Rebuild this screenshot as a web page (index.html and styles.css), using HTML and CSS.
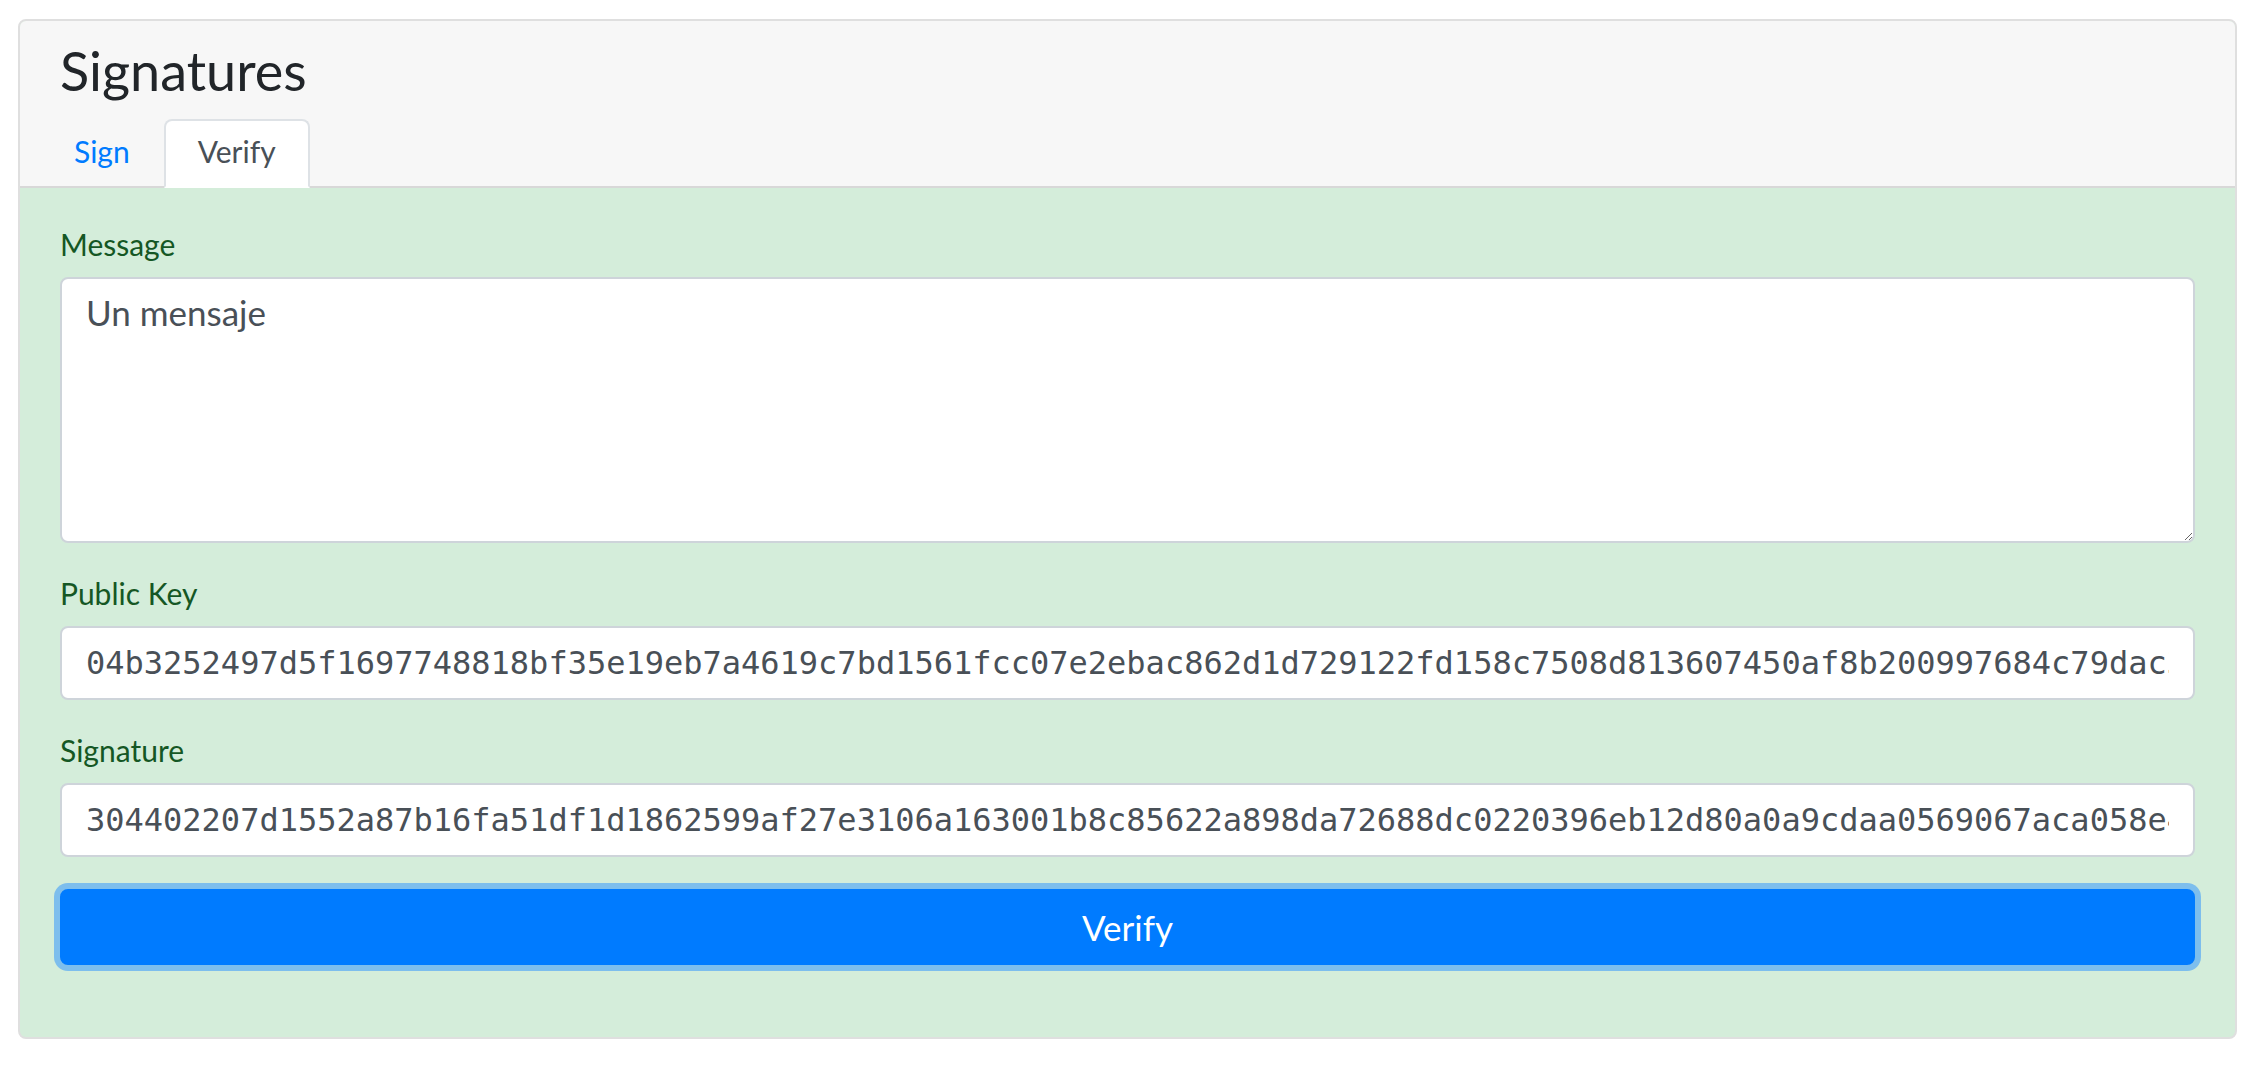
FILE: index.html
```html
<!DOCTYPE html>
<html lang="en">
<head>
<meta charset="utf-8">
<title>Signatures</title>
<link rel="stylesheet" href="styles.css">
</head>
<body>
<div class="page">
  <div class="card">
    <div class="card-header">
      <h3 class="card-title">Signatures</h3>
      <ul class="tabs">
        <li><a class="tab-link" href="#">Sign</a></li>
        <li><a class="tab-link active" href="#">Verify</a></li>
      </ul>
    </div>
    <div class="card-body">
      <div class="form-group">
        <label class="field-label" for="msg">Message</label>
        <textarea id="msg" class="field field-area">Un mensaje</textarea>
      </div>
      <div class="form-group">
        <label class="field-label" for="pub">Public Key</label>
        <input id="pub" class="field field-mono" type="text" value="04b3252497d5f1697748818bf35e19eb7a4619c7bd1561fcc07e2ebac862d1d729122fd158c7508d813607450af8b200997684c79dac3e0f5b7c1a2d4e6f8091a2">
      </div>
      <div class="form-group">
        <label class="field-label" for="sig">Signature</label>
        <input id="sig" class="field field-mono" type="text" value="304402207d1552a87b16fa51df1d1862599af27e3106a163001b8c85622a898da72688dc0220396eb12d80a0a9cdaa0569067aca058e4f1b2c3d">
      </div>
      <button class="btn-verify" type="button">Verify</button>
    </div>
  </div>
</div>
</body>
</html>
```
FILE: styles.css
```css
html, body {
  margin: 0;
  padding: 0;
  background: #ffffff;
}

body {
  font-family: "Lato", "DejaVu Sans", sans-serif;
  color: #212529;
}

.page {
  padding: 19px 19px 31px 18px;
}

.card {
  border: 2px solid #dfdfdf;
  border-radius: 8px;
  overflow: hidden;
  background: #d4edda;
}

.card-header {
  background: #f7f7f7;
  padding: 18px 40px 0 40px;
  border-bottom: 2px solid #d8d8d8;
}

.card-title {
  margin: 0 0 16px 0;
  font-size: 54px;
  line-height: 64px;
  font-weight: 400;
  color: #212529;
}

.tabs {
  list-style: none;
  margin: 0 0 -2px -20px;
  padding: 0;
  display: flex;
}

.tab-link {
  display: block;
  padding: 15px 32px 19px;
  font-size: 30px;
  line-height: 31px;
  color: #007bff;
  text-decoration: none;
  border: 2px solid transparent;
  border-top-left-radius: 8px;
  border-top-right-radius: 8px;
}

.tab-link.active {
  color: #495057;
  background: #ffffff;
  border-color: #dee2e6 #dee2e6 #ffffff;
}

.card-body {
  padding: 38px 40px 72px;
}

.form-group {
  display: flex;
  flex-direction: column;
  margin-bottom: 32px;
}

.field-label {
  font-size: 30px;
  line-height: 36px;
  color: #155724;
  margin-bottom: 15px;
}

.field {
  box-sizing: border-box;
  width: 100%;
  border: 2px solid #ced4da;
  border-radius: 8px;
  background: #ffffff;
  color: #495057;
  padding: 11px 24px;
  margin: 0;
  outline: none;
}

.field-area {
  height: 266px;
  padding-top: 9px;
  font-family: "Lato", "DejaVu Sans", sans-serif;
  font-size: 35px;
  line-height: 48px;
  resize: vertical;
}

.field-mono {
  height: 74px;
  padding-top: 10px;
  padding-bottom: 10px;
  font-family: "DejaVu Sans Mono", monospace;
  font-size: 32px;
  line-height: 50px;
}

.btn-verify {
  display: block;
  box-sizing: border-box;
  width: 100%;
  height: 76px;
  margin: 0;
  border: 2px solid #007bff;
  border-radius: 8px;
  background: #007bff;
  color: #ffffff;
  font-family: "Lato", "DejaVu Sans", sans-serif;
  font-size: 35px;
  line-height: 48px;
  box-shadow: 0 0 0 6px rgba(38, 143, 255, 0.5);
  cursor: pointer;
}
```
